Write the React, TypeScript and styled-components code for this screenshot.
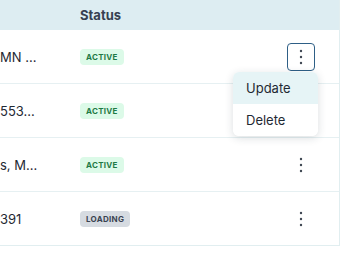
import React from 'react';
import styled, { createGlobalStyle } from 'styled-components';

const GlobalStyle = createGlobalStyle`
  html, body {
    margin: 0;
    padding: 0;
    background: #ffffff;
    font-family: Inter, "Noto Sans", sans-serif;
  }
`;

const Table = styled.div`
  width: 339px;
  display: grid;
  grid-template-columns: 64px 198px 77px;
  border-right: 1px solid #e1eef0;
  border-bottom: 1px solid #e1eef0;
`;

const HeaderCell = styled.div`
  height: 30px;
  background: #ddedf2;
  display: flex;
  align-items: center;
  padding-left: 16px;
  font-size: 13px;
  font-weight: 700;
  color: #374151;
`;

const Cell = styled.div<{ $last?: boolean; $center?: boolean; $flush?: boolean }>`
  position: relative;
  height: 53px;
  display: flex;
  align-items: center;
  justify-content: ${p => (p.$center ? 'center' : 'flex-start')};
  padding-left: ${p => (p.$center || p.$flush ? '0' : '16px')};
  border-bottom: ${p => (p.$last ? 'none' : '1px solid #e6f0f2')};
  font-size: 13px;
  color: #1f2933;
  min-width: 0;
`;

const NameText = styled.span`
  white-space: nowrap;
  overflow: hidden;
`;

const Badge = styled.span<{ $tone: 'active' | 'loading' }>`
  display: inline-flex;
  align-items: center;
  height: 16px;
  padding: 0 6px;
  border-radius: 4px;
  font-size: 8px;
  font-weight: 700;
  letter-spacing: 0.3px;
  text-transform: uppercase;
  background: ${p => (p.$tone === 'active' ? '#dcfae8' : '#d6dbe1')};
  color: ${p => (p.$tone === 'active' ? '#1f7a45' : '#3a4350')};
`;

const KebabButton = styled.button<{ $open?: boolean }>`
  width: 28px;
  height: 28px;
  display: flex;
  align-items: center;
  justify-content: center;
  padding: 0;
  background: #ffffff;
  border: 1px solid ${p => (p.$open ? '#2e5f86' : 'transparent')};
  border-radius: 4px;
  cursor: pointer;
`;

const Menu = styled.div`
  position: absolute;
  top: 42px;
  right: 21px;
  width: 85px;
  background: #ffffff;
  border-radius: 6px;
  box-shadow: 0 2px 8px rgba(30, 50, 60, 0.16);
  overflow: hidden;
  z-index: 2;
`;

const MenuItem = styled.div<{ $active?: boolean }>`
  height: 32px;
  display: flex;
  align-items: center;
  padding-left: 13px;
  font-size: 13px;
  color: #1f2933;
  background: ${p => (p.$active ? '#e6f4f6' : '#ffffff')};
`;

const Dots = () => (
  <svg width="4" height="16" viewBox="0 0 4 16">
    <circle cx="2" cy="2" r="1.2" fill="#3f4752" />
    <circle cx="2" cy="8" r="1.2" fill="#3f4752" />
    <circle cx="2" cy="14" r="1.2" fill="#3f4752" />
  </svg>
);

type Row = { name: string; status: 'active' | 'loading' };

// the name column is scrolled off to the left; only the tail of each value shows
const rows: Row[] = [
  { name: 'MN ...', status: 'active' },
  { name: '553...', status: 'active' },
  { name: 's, M...', status: 'active' },
  { name: '391', status: 'loading' },
];

const App: React.FC = () => {
  return (
    <>
      <GlobalStyle />
      <Table>
        <HeaderCell />
        <HeaderCell>Status</HeaderCell>
        <HeaderCell />
        {rows.map((row, i) => {
          const last = i === rows.length - 1;
          return (
            <React.Fragment key={i}>
              <Cell $last={last} $flush>
                <NameText>{row.name}</NameText>
              </Cell>
              <Cell $last={last}>
                <Badge $tone={row.status}>{row.status}</Badge>
              </Cell>
              <Cell $last={last} $center>
                <KebabButton $open={i === 0} aria-label="Actions">
                  <Dots />
                </KebabButton>
                {i === 0 && (
                  <Menu>
                    <MenuItem $active>Update</MenuItem>
                    <MenuItem>Delete</MenuItem>
                  </Menu>
                )}
              </Cell>
            </React.Fragment>
          );
        })}
      </Table>
    </>
  );
};

export default App;
